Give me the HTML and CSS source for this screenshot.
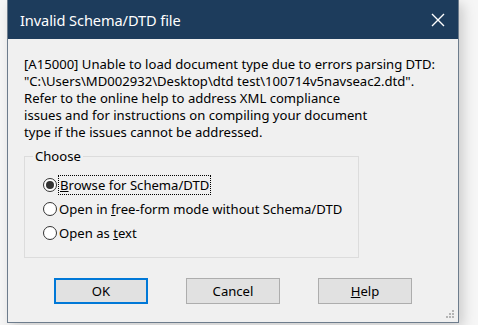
FILE: index.html
```html
<!DOCTYPE html>
<html lang="en">
<head>
    <meta charset="utf-8"/>
    <title>Invalid Schema/DTD file</title>
    <link rel="stylesheet" href="styles.css">
</head>
<body>
    <div class="dialog">
        <div class="titlebar">
            <span class="title">Invalid Schema/DTD file</span>
            <svg class="close" width="14" height="14" viewBox="0 0 14 14">
                <path d="M1 1 L13 13 M13 1 L1 13" stroke="#ffffff" stroke-width="1.4" fill="none"/>
            </svg>
        </div>
        <div class="content">
            <p class="message">
                [A15000] Unable to load document type due to errors parsing DTD:<br>
                "C:\Users\MD002932\Desktop\dtd test\100714v5navseac2.dtd".<br>
                Refer to the online help to address XML compliance<br>
                issues and for instructions on compiling your document<br>
                type if the issues cannot be addressed.
            </p>
            <fieldset class="group">
                <legend>Choose</legend>
                <label class="option">
                    <span class="radio checked"></span>
                    <span class="focus"><u>B</u>rowse for Schema/DTD</span>
                </label>
                <label class="option">
                    <span class="radio"></span>
                    <span>Open in <u>f</u>ree-form mode without Schema/DTD</span>
                </label>
                <label class="option">
                    <span class="radio"></span>
                    <span>Open as <u>t</u>ext</span>
                </label>
            </fieldset>
            <div class="buttons">
                <button class="btn default">OK</button>
                <button class="btn">Cancel</button>
                <button class="btn"><u>H</u>elp</button>
            </div>
            <div class="grip">
                <i></i><i></i><i></i><i></i><i></i><i></i>
            </div>
        </div>
    </div>
</body>
</html>
```

FILE: styles.css
```css
html, body {
    margin: 0;
    padding: 0;
    width: 478px;
    height: 325px;
    overflow: hidden;
    background-color: #f6f6f6;
    font-family: "Noto Sans", "Open Sans", sans-serif;
}
body {
    padding-left: 7px;
    box-sizing: border-box;
}
.dialog {
    width: 452px;
    height: 323px;
    box-sizing: border-box;
    border: 1px solid #6d7c8c;
    border-top: none;
    background-color: #f0f0f0;
    box-shadow: 4px 4px 12px rgba(0, 0, 0, 0.18);
    display: flex;
    flex-direction: column;
}
.titlebar {
    height: 39px;
    background-color: #1d3c5c;
    display: flex;
    align-items: center;
    justify-content: space-between;
    padding: 0 13px 0 12px;
    flex-shrink: 0;
}
.title {
    color: #ffffff;
    font-size: 14.6px;
    letter-spacing: -0.1px;
}
.close {
    display: block;
}
.content {
    flex: 1;
    position: relative;
    padding: 17px 16px 0 16px;
}
.message {
    margin: 0;
    font-size: 13.1px;
    line-height: 17px;
    color: #000000;
    white-space: nowrap;
}
.group {
    margin: 6px 0 0 0;
    width: 335px;
    box-sizing: border-box;
    border: 1px solid #dcdcdc;
    padding: 8px 0 12px 18px;
    font-size: 13.1px;
}
.group legend {
    margin-left: -10px;
    padding: 0 2px;
    color: #000000;
}
.option {
    display: flex;
    align-items: center;
    height: 24px;
    color: #000000;
}
.radio {
    width: 14px;
    height: 14px;
    box-sizing: border-box;
    border: 1px solid #333333;
    border-radius: 50%;
    background: #ffffff;
    margin-right: 2px;
    display: flex;
    align-items: center;
    justify-content: center;
    flex-shrink: 0;
}
.radio.checked::after {
    content: "";
    width: 8px;
    height: 8px;
    border-radius: 50%;
    background: #333333;
}
.focus {
    outline: 1px dotted #000000;
    outline-offset: 0;
    padding: 0 1px;
}
.buttons {
    display: flex;
    justify-content: center;
    gap: 38px;
    margin-top: 20px;
    width: 418px;
}
.btn {
    width: 94px;
    height: 26px;
    box-sizing: border-box;
    background: #e1e1e1;
    border: 1px solid #adadad;
    font-family: inherit;
    font-size: 13.1px;
    color: #000000;
    padding: 0;
}
.btn.default {
    border: 2px solid #0078d7;
}
.grip {
    position: absolute;
    right: 3px;
    bottom: 3px;
    width: 9px;
    height: 9px;
    display: grid;
    grid-template-columns: repeat(3, 3px);
    grid-template-rows: repeat(3, 3px);
}
.grip i {
    width: 2px;
    height: 2px;
    background: #b4b4b4;
}
.grip i:nth-child(1) { grid-area: 1 / 3; }
.grip i:nth-child(2) { grid-area: 2 / 2; }
.grip i:nth-child(3) { grid-area: 2 / 3; }
.grip i:nth-child(4) { grid-area: 3 / 1; }
.grip i:nth-child(5) { grid-area: 3 / 2; }
.grip i:nth-child(6) { grid-area: 3 / 3; }
```
